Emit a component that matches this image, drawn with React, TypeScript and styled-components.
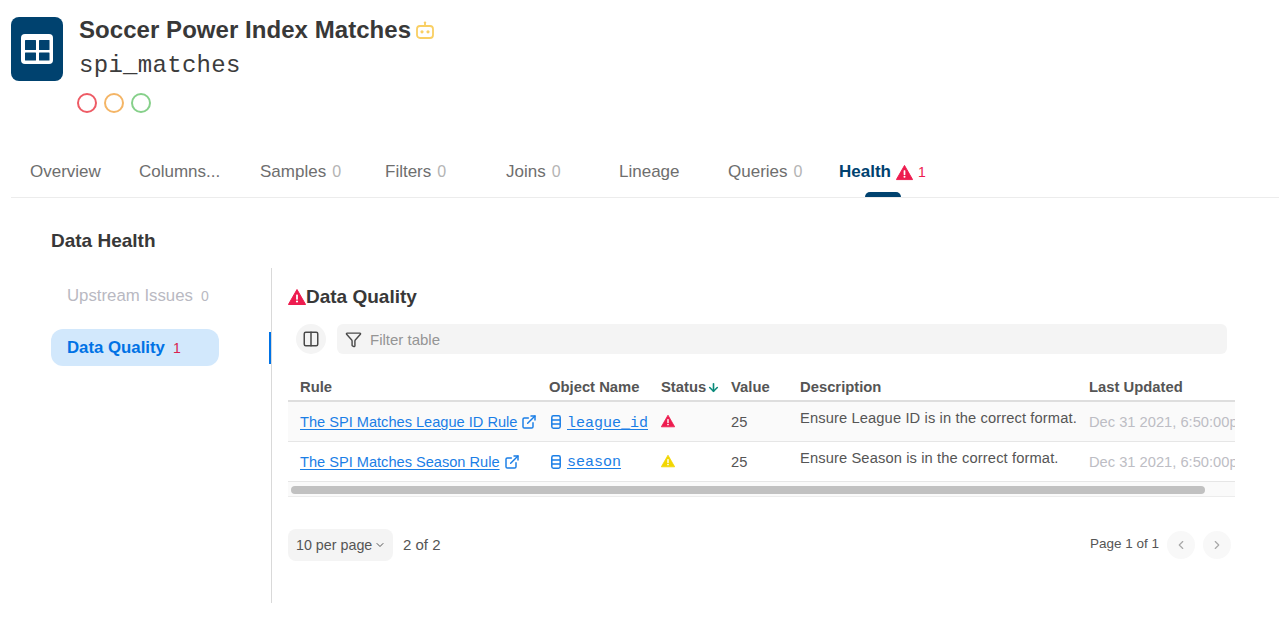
import React from "react";
import styled, { createGlobalStyle } from "styled-components";
import { ArrowDown, ChevronDown, ChevronLeft, ChevronRight, Columns2, ExternalLink, Filter } from "lucide-react";

const GlobalStyle = createGlobalStyle`
  html, body { margin: 0; padding: 0; background: #fff; }
  body { font-family: "Liberation Sans", Arial, sans-serif; color: #3a3a3a; }
  * { box-sizing: border-box; }
`;

const Page = styled.div`
  width: 1279px;
  height: 629px;
  overflow: hidden;
`;

const Header = styled.header`
  display: flex;
  gap: 16px;
  height: 150px;
  padding: 17px 0 0 11px;
`;

const TableBadge = styled.div`
  width: 52px;
  height: 64px;
  border-radius: 8px;
  background: #00426f;
  display: flex;
  align-items: center;
  justify-content: center;
`;

const TitleBlock = styled.div`
  display: flex;
  flex-direction: column;
`;

const TitleRow = styled.div`
  display: flex;
  align-items: center;
  gap: 5px;
  height: 26px;
`;

const Title = styled.h1`
  margin: 0;
  font-size: 24px;
  line-height: 26px;
  font-weight: 700;
  color: #383838;
  letter-spacing: 0.05px;
`;

const TechnicalName = styled.div`
  margin-top: 10px;
  font-family: "Liberation Mono", monospace;
  font-size: 24px;
  line-height: 26px;
  letter-spacing: 0.3px;
  color: #3c3c3c;
`;

const Dots = styled.div`
  display: flex;
  gap: 7px;
  margin: 14px 0 0 -2px;
`;

const Dot = styled.span<{ $color: string }>`
  width: 20px;
  height: 20px;
  border-radius: 50%;
  border: 2px solid ${(p) => p.$color};
`;

const Tabs = styled.nav`
  position: relative;
  display: flex;
  align-items: flex-start;
  height: 48px;
  margin-left: 11px;
  padding: 12px 0 0 19px;
  border-bottom: 1px solid #ececec;
`;

const Tab = styled.div<{ $width: number; $active?: boolean }>`
  width: ${(p) => p.$width}px;
  display: flex;
  align-items: center;
  gap: ${(p) => (p.$active ? "5px" : "6px")};
  font-size: 17px;
  line-height: 20px;
  white-space: nowrap;
  font-weight: ${(p) => (p.$active ? 700 : 400)};
  color: ${(p) => (p.$active ? "#00426f" : "#6e6e6e")};
`;

const TabCount = styled.span<{ $alert?: boolean }>`
  font-size: ${(p) => (p.$alert ? "14px" : "16px")};
  font-weight: 400;
  color: ${(p) => (p.$alert ? "#ed1c4f" : "#b4b4b4")};
`;

const TabMarker = styled.div`
  position: absolute;
  left: 854px;
  bottom: 0;
  width: 36px;
  height: 5px;
  border-radius: 5px 5px 0 0;
  background: #00426f;
`;

const Body = styled.section`
  padding: 32px 0 0 51px;
`;

const SectionTitle = styled.h2`
  margin: 0;
  font-size: 19px;
  line-height: 22px;
  font-weight: 700;
  color: #383838;
`;

const Columns = styled.div`
  display: flex;
  margin-top: 16px;
`;

const Sidebar = styled.aside`
  position: relative;
  width: 221px;
  height: 335px;
  border-right: 1px solid #d9d9d9;
  padding-top: 9px;
`;

const SideItem = styled.div<{ $active?: boolean }>`
  width: 168px;
  height: 37px;
  margin-bottom: 15px;
  padding-left: 16px;
  border-radius: 12px;
  display: flex;
  align-items: center;
  gap: 8px;
  font-size: 16.8px;
  font-weight: ${(p) => (p.$active ? 700 : 400)};
  color: ${(p) => (p.$active ? "#0072e5" : "#b9b9c2")};
  background: ${(p) => (p.$active ? "#d2e8fc" : "transparent")};
`;

const SideCount = styled.span<{ $alert?: boolean }>`
  font-size: 14px;
  font-weight: 400;
  color: ${(p) => (p.$alert ? "#d9224f" : "#b9b9c2")};
`;

const SideMarker = styled.div`
  position: absolute;
  right: 0;
  top: 64px;
  width: 2px;
  height: 32px;
  background: #0072e5;
`;

const Main = styled.div`
  width: 947px;
  margin-left: 16px;
  padding-top: 18px;
`;

const MainTitle = styled.h3`
  display: flex;
  align-items: center;
  margin: 0;
  font-size: 19px;
  line-height: 22px;
  font-weight: 700;
  color: #383838;
`;

const Toolbar = styled.div`
  display: flex;
  align-items: center;
  gap: 11px;
  margin: 16px 0 0 8px;
`;

const RoundButton = styled.div`
  width: 30px;
  height: 30px;
  border-radius: 50%;
  background: #f4f4f4;
  color: #4a4a4a;
  display: flex;
  align-items: center;
  justify-content: center;
`;

const FilterBox = styled.div`
  width: 890px;
  height: 30px;
  padding-left: 8px;
  gap: 8px;
  border-radius: 6px;
  background: #f4f4f4;
  display: flex;
  align-items: center;
  font-size: 15px;
  color: #959595;
`;

const FilterIcon = styled.span`
  display: flex;
  color: #4a4a4a;
`;

const TableWrap = styled.div`
  margin-top: 20px;
  overflow: hidden;
`;

const Table = styled.table`
  width: 947px;
  table-layout: fixed;
  border-collapse: collapse;
`;

const Th = styled.th<{ $width: number }>`
  width: ${(p) => p.$width}px;
  height: 27px;
  padding: 0 0 0 12px;
  text-align: left;
  font-size: 14.8px;
  font-weight: 700;
  color: #555;
  white-space: nowrap;
  border-bottom: 2px solid #dedede;
`;

const Row = styled.tr<{ $shaded?: boolean }>`
  height: 40px;
  background: ${(p) => (p.$shaded ? "#fafafa" : "#fff")};
  border-bottom: 1px solid #e6e6e6;
`;

const Td = styled.td`
  padding: 2px 0 0 12px;
  font-size: 14.7px;
  color: #555;
  white-space: nowrap;
  overflow: hidden;
`;

const DescriptionCell = styled(Td)`
  vertical-align: top;
  padding-top: 8px;
  line-height: 17px;
  letter-spacing: 0.12px;
`;

const DateCell = styled(Td)`
  color: #bdbdc4;
  padding-top: 1px;
`;

const CellLink = styled.a<{ $indent?: boolean }>`
  display: inline-flex;
  align-items: center;
  gap: ${(p) => (p.$indent ? "6px" : "4px")};
  margin-left: ${(p) => (p.$indent ? "2px" : "0")};
  color: #1a7ee6;
`;

const Underlined = styled.span<{ $mono?: boolean }>`
  text-decoration: underline;
  text-underline-offset: 2px;
  padding-top: ${(p) => (p.$mono ? "2px" : "0")};
  font-family: ${(p) => (p.$mono ? '"Liberation Mono", monospace' : "inherit")};
  font-size: ${(p) => (p.$mono ? "15px" : "14.6px")};
`;

const SortArrow = styled.span`
  display: inline-flex;
  vertical-align: -2px;
  margin-left: 1px;
  color: #0a8a7a;
`;

const Scrollbar = styled.div`
  height: 15px;
  padding: 4px 30px 3px 3px;
  background: #fafafa;
  border-bottom: 1px solid #ececec;
`;

const ScrollThumb = styled.div`
  height: 8px;
  border-radius: 4px;
  background: #c1c1c1;
`;

const Footer = styled.div`
  display: flex;
  align-items: center;
  justify-content: space-between;
  margin-top: 32px;
  padding-right: 4px;
  font-size: 15px;
  color: #555;
`;

const FooterGroup = styled.div`
  display: flex;
  align-items: center;
`;

const PerPage = styled.div`
  width: 105px;
  height: 32px;
  margin-right: 10px;
  padding-left: 8px;
  gap: 2px;
  border-radius: 8px;
  background: #f4f4f4;
  font-size: 14.3px;
  display: flex;
  align-items: center;
`;

const PageLabel = styled.span`
  margin-right: 8px;
  padding-bottom: 2px;
  font-size: 13.5px;
`;

const PageButton = styled.div`
  width: 28px;
  height: 28px;
  margin-left: 8px;
  &:first-of-type { margin-left: 0; }
  border-radius: 50%;
  background: #f8f8f8;
  color: #a8a8a8;
  display: flex;
  align-items: center;
  justify-content: center;
`;

const WarnIcon = ({ size, color }: { size: number; color: string }) => (
  <svg width={size} height={size} viewBox="0 0 18 18">
    <path d="M9 1.5 17.6 16.5H.4Z" fill={color} stroke={color} strokeLinejoin="round" />
    <rect x="8.1" y="6.5" width="1.8" height="5.2" rx=".6" fill="#fff" />
    <circle cx="9" cy="13.5" r="1.1" fill="#fff" />
  </svg>
);

const GridIcon = () => (
  <svg width="32" height="30" viewBox="0 0 32 30">
    <rect width="32" height="30" rx="4" fill="#fff" />
    <rect x="4" y="6" width="11" height="10" fill="#00426f" rx=".5" />
    <rect x="18" y="6" width="10.5" height="10" fill="#00426f" rx=".5" />
    <rect x="4" y="18.5" width="11" height="8" fill="#00426f" rx=".5" />
    <rect x="18" y="18.5" width="10.5" height="8" fill="#00426f" rx=".5" />
  </svg>
);

const BotIcon = () => (
  <svg width="18" height="18" viewBox="0 0 18 18">
    <rect x="1" y="5" width="16" height="12" rx="3" fill="none" stroke="#f9cf63" strokeWidth="1.8" />
    <path d="M9 1.2V5" stroke="#f9cf63" strokeWidth="1.8" />
    <circle cx="9" cy="1.6" r="1.2" fill="#f9cf63" />
    <circle cx="6" cy="10.8" r="1.6" fill="#f9cf63" />
    <circle cx="12" cy="10.8" r="1.6" fill="#f9cf63" />
  </svg>
);

const ColumnIcon = () => (
  <svg width="10" height="14" viewBox="0 0 10 14" fill="none" stroke="#1a7ee6" strokeWidth="1.5">
    <rect x=".8" y=".8" width="8.4" height="12.4" rx="1.6" />
    <path d="M.8 4.9H9.2M.8 9.1H9.2" />
  </svg>
);

const rows = [
  { rule: "The SPI Matches League ID Rule", object: "league_id", color: "#ed1c4f", description: "Ensure League ID is in the correct format." },
  { rule: "The SPI Matches Season Rule", object: "season", color: "#f2d600", description: "Ensure Season is in the correct format." },
];

export default function App() {
  return (
    <Page>
      <GlobalStyle />
      <Header>
        <TableBadge>
          <GridIcon />
        </TableBadge>
        <TitleBlock>
          <TitleRow>
            <Title>Soccer Power Index Matches</Title>
            <BotIcon />
          </TitleRow>
          <TechnicalName>spi_matches</TechnicalName>
          <Dots>
            <Dot $color="#ee5b65" />
            <Dot $color="#f4b566" />
            <Dot $color="#86d08a" />
          </Dots>
        </TitleBlock>
      </Header>

      <Tabs>
        <Tab $width={109}>Overview</Tab>
        <Tab $width={121}>Columns...</Tab>
        <Tab $width={125}>Samples <TabCount>0</TabCount></Tab>
        <Tab $width={121}>Filters <TabCount>0</TabCount></Tab>
        <Tab $width={113}>Joins <TabCount>0</TabCount></Tab>
        <Tab $width={109}>Lineage</Tab>
        <Tab $width={111}>Queries <TabCount>0</TabCount></Tab>
        <Tab $width={100} $active>
          Health <WarnIcon size={17} color="#ed1c4f" /> <TabCount $alert>1</TabCount>
        </Tab>
        <TabMarker />
      </Tabs>

      <Body>
        <SectionTitle>Data Health</SectionTitle>
        <Columns>
          <Sidebar>
            <SideItem>Upstream Issues <SideCount>0</SideCount></SideItem>
            <SideItem $active>Data Quality <SideCount $alert>1</SideCount></SideItem>
            <SideMarker />
          </Sidebar>
          <Main>
            <MainTitle>
              <WarnIcon size={18} color="#ed1c4f" />
              Data Quality
            </MainTitle>
            <Toolbar>
              <RoundButton>
                <Columns2 size={18} strokeWidth={2} />
              </RoundButton>
              <FilterBox>
                <FilterIcon>
                  <Filter size={17} strokeWidth={2} />
                </FilterIcon>
                Filter table
              </FilterBox>
            </Toolbar>
            <TableWrap>
              <Table>
                <thead>
                  <tr>
                    <Th $width={249}>Rule</Th>
                    <Th $width={112}>Object Name</Th>
                    <Th $width={70}>
                      Status
                      <SortArrow>
                        <ArrowDown size={13} strokeWidth={3} />
                      </SortArrow>
                    </Th>
                    <Th $width={69}>Value</Th>
                    <Th $width={289}>Description</Th>
                    <Th $width={158}>Last Updated</Th>
                  </tr>
                </thead>
                <tbody>
                  {rows.map((row, i) => (
                    <Row key={row.object} $shaded={i === 0}>
                      <Td>
                        <CellLink>
                          <Underlined>{row.rule}</Underlined>
                          <ExternalLink size={16} strokeWidth={2.2} />
                        </CellLink>
                      </Td>
                      <Td>
                        <CellLink $indent>
                          <ColumnIcon />
                          <Underlined $mono>{row.object}</Underlined>
                        </CellLink>
                      </Td>
                      <Td>
                        <WarnIcon size={14} color={row.color} />
                      </Td>
                      <Td>25</Td>
                      <DescriptionCell>{row.description}</DescriptionCell>
                      <DateCell>Dec 31 2021, 6:50:00pm</DateCell>
                    </Row>
                  ))}
                </tbody>
              </Table>
              <Scrollbar>
                <ScrollThumb />
              </Scrollbar>
            </TableWrap>
            <Footer>
              <FooterGroup>
                <PerPage>
                  10 per page
                  <ChevronDown size={12} />
                </PerPage>
                2 of 2
              </FooterGroup>
              <FooterGroup>
                <PageLabel>Page 1 of 1</PageLabel>
                <PageButton>
                  <ChevronLeft size={14} />
                </PageButton>
                <PageButton>
                  <ChevronRight size={14} />
                </PageButton>
              </FooterGroup>
            </Footer>
          </Main>
        </Columns>
      </Body>
    </Page>
  );
}
